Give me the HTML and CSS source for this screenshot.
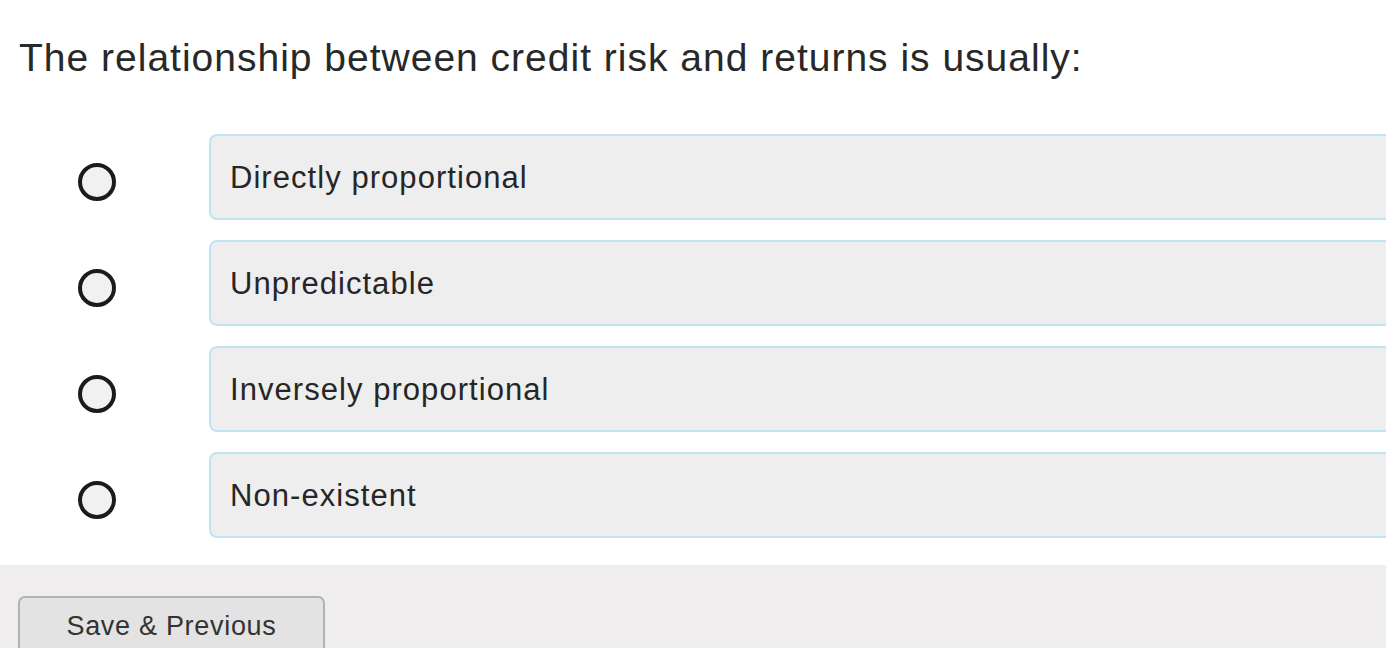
FILE: index.html
```html
<!DOCTYPE html>
<html lang="en">
<head>
<meta charset="utf-8">
<title>Question</title>
<link rel="stylesheet" href="styles.css">
</head>
<body>
<main class="page">
  <p class="question">The relationship between credit risk and returns is usually:</p>
  <ul class="options">
    <li class="option"><span class="radio"></span><span class="answer">Directly proportional</span></li>
    <li class="option"><span class="radio"></span><span class="answer">Unpredictable</span></li>
    <li class="option"><span class="radio"></span><span class="answer">Inversely proportional</span></li>
    <li class="option"><span class="radio"></span><span class="answer">Non-existent</span></li>
  </ul>
  <footer class="footer">
    <button class="btn" type="button">Save &amp; Previous</button>
  </footer>
</main>
</body>
</html>
```
FILE: styles.css
```css
html, body {
  margin: 0;
  padding: 0;
  background: #ffffff;
  overflow: hidden;
  height: 100%;
}
body {
  font-family: "Liberation Sans", Arial, Helvetica, sans-serif;
  color: #262626;
}
.page {
  display: flex;
  flex-direction: column;
  min-height: 100%;
}
.question {
  margin: 0;
  padding: 36px 0 0 19px;
  font-size: 39px;
  line-height: 44px;
  letter-spacing: 1px;
  color: #282828;
  white-space: nowrap;
}
.options {
  list-style: none;
  margin: 54px 0 0 0;
  padding: 0;
  display: flex;
  flex-direction: column;
  gap: 20px;
}
.option {
  display: flex;
  align-items: center;
  padding-left: 78px;
  margin-right: -30px;
}
.radio {
  flex: none;
  width: 38px;
  height: 38px;
  box-sizing: border-box;
  border: 4px solid #1b1b1b;
  border-radius: 50%;
  background: #f1f1f1;
  margin-top: 10px;
}
.answer {
  flex: 1;
  margin-left: 93px;
  height: 86px;
  box-sizing: border-box;
  border: 2px solid #bfe4f4;
  border-radius: 8px;
  background: #eeeeee;
  display: flex;
  align-items: center;
  padding: 2px 0 0 19px;
  font-size: 31px;
  letter-spacing: 1.05px;
  color: #262626;
}
.footer {
  flex: 1;
  margin-top: 27px;
  background: #efedee;
  padding: 31px 0 0 18px;
}
.btn {
  width: 307px;
  height: 62px;
  box-sizing: border-box;
  border: 2px solid #b2b2b2;
  border-radius: 7px;
  background: #e3e3e3;
  font-family: "Liberation Sans", Arial, Helvetica, sans-serif;
  font-size: 27px;
  letter-spacing: 0.7px;
  color: #333333;
  padding: 0 0 2px 0;
}
```
